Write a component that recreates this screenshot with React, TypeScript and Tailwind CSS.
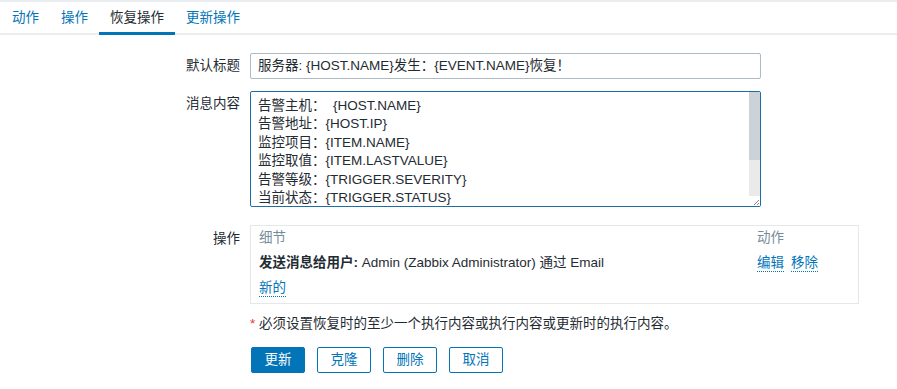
import React from 'react';

const font = "font-['Liberation_Sans','Noto_Sans_CJK_SC',sans-serif]";

export default function App() {
  const tabs = ['动作', '操作', '恢复操作', '更新操作'];
  const lines = [
    '告警主机：  {HOST.NAME}',
    '告警地址：{HOST.IP}',
    '监控项目：{ITEM.NAME}',
    '监控取值：{ITEM.LASTVALUE}',
    '告警等级：{TRIGGER.SEVERITY}',
    '当前状态：{TRIGGER.STATUS}',
  ];

  return (
    <div className={`${font} w-[897px] h-[389px] bg-white text-[13.5px] text-[#1f2c33] border-t-2 border-[#ebeef0] overflow-hidden`}>
      {/* tabs */}
      <div className="flex h-[33px] pl-[1px] border-b-2 border-[#ebeef0]">
        {tabs.map((t, i) => (
          <div
            key={t}
            className={`px-[11px] flex items-center h-[33px] ${
              i === 2 ? 'text-[#1f2c33] border-b-[3px] border-[#0275b8] pt-[3px]' : 'text-[#0275b8]'
            }`}
          >
            {t}
          </div>
        ))}
      </div>

      <div className="pt-[18px]">
        {/* 默认标题 */}
        <div className="flex">
          <div className="w-[250px] pr-[10px] text-right leading-[26px]">默认标题</div>
          <div className="w-[511px] h-[26px] border border-[#acbbc4] rounded-[2px] px-[7px] leading-[24px] whitespace-nowrap">
            服务器: {'{HOST.NAME}'}发生：{'{EVENT.NAME}'}恢复！
          </div>
        </div>

        {/* 消息内容 */}
        <div className="flex mt-[12px]">
          <div className="w-[250px] pr-[10px] text-right pt-[4px] leading-[18.4px]">消息内容</div>
          <div className="w-[511px] h-[116px] border border-[#1c6ea4] rounded-[2px] flex overflow-hidden">
            <div className="flex-1 px-[7px] pt-[5px] leading-[18.4px] whitespace-pre">
              {lines.map((l) => (
                <div key={l}>{l}</div>
              ))}
            </div>
            <div className="w-[11px] flex flex-col">
              <div className="h-[68px] bg-[#cbd3d9]" />
              <div className="h-[36px] bg-[#eaeaea]" />
              <div className="flex-1 bg-white flex items-end justify-end">
                <svg width="6" height="6" viewBox="0 0 6 6" className="mb-[1px] mr-[1px]">
                  <path d="M6 1 L1 6 M6 4 L4 6" stroke="#8a8a8a" strokeWidth="1" />
                </svg>
              </div>
            </div>
          </div>
        </div>

        {/* 操作 */}
        <div className="flex mt-[18px]">
          <div className="w-[250px] pr-[10px] text-right pt-[1px] leading-[25px]">操作</div>
          <div className="w-[609px] border border-[#e5e8ea] px-2 pb-[2px]">
            <div className="grid grid-cols-[1fr_93px] h-[25px] items-center text-[#768d99]">
              <div>细节</div>
              <div>动作</div>
            </div>
            <div className="grid grid-cols-[1fr_93px] h-[25px] items-center">
              <div className="whitespace-nowrap">
                <span className="font-bold">发送消息给用户:</span> Admin (Zabbix Administrator) 通过 Email
              </div>
              <div className="flex gap-[7px] text-[#0275b8]">
                <span className="border-b border-dotted border-[#0275b8] leading-[16px]">编辑</span>
                <span className="border-b border-dotted border-[#0275b8] leading-[16px]">移除</span>
              </div>
            </div>
            <div className="h-[25px] flex items-center">
              <span className="text-[#0275b8] border-b border-dotted border-[#0275b8] leading-[16px]">新的</span>
            </div>
          </div>
        </div>

        {/* note */}
        <div className="pl-[250px] mt-[12px] leading-[16px] whitespace-nowrap">
          <span className="text-[#e33734]">*</span> 必须设置恢复时的至少一个执行内容或执行内容或更新时的执行内容。
        </div>

        {/* buttons */}
        <div className="pl-[251px] mt-[15px] flex gap-[12px]">
          <button className="w-[54px] h-[26px] rounded-[2px] bg-[#0275b8] text-white border border-[#0275b8]">更新</button>
          <button className="w-[54px] h-[26px] rounded-[2px] bg-white text-[#0275b8] border border-[#0275b8]">克隆</button>
          <button className="w-[54px] h-[26px] rounded-[2px] bg-white text-[#0275b8] border border-[#0275b8]">删除</button>
          <button className="w-[54px] h-[26px] rounded-[2px] bg-white text-[#0275b8] border border-[#0275b8]">取消</button>
        </div>
      </div>
    </div>
  );
}
